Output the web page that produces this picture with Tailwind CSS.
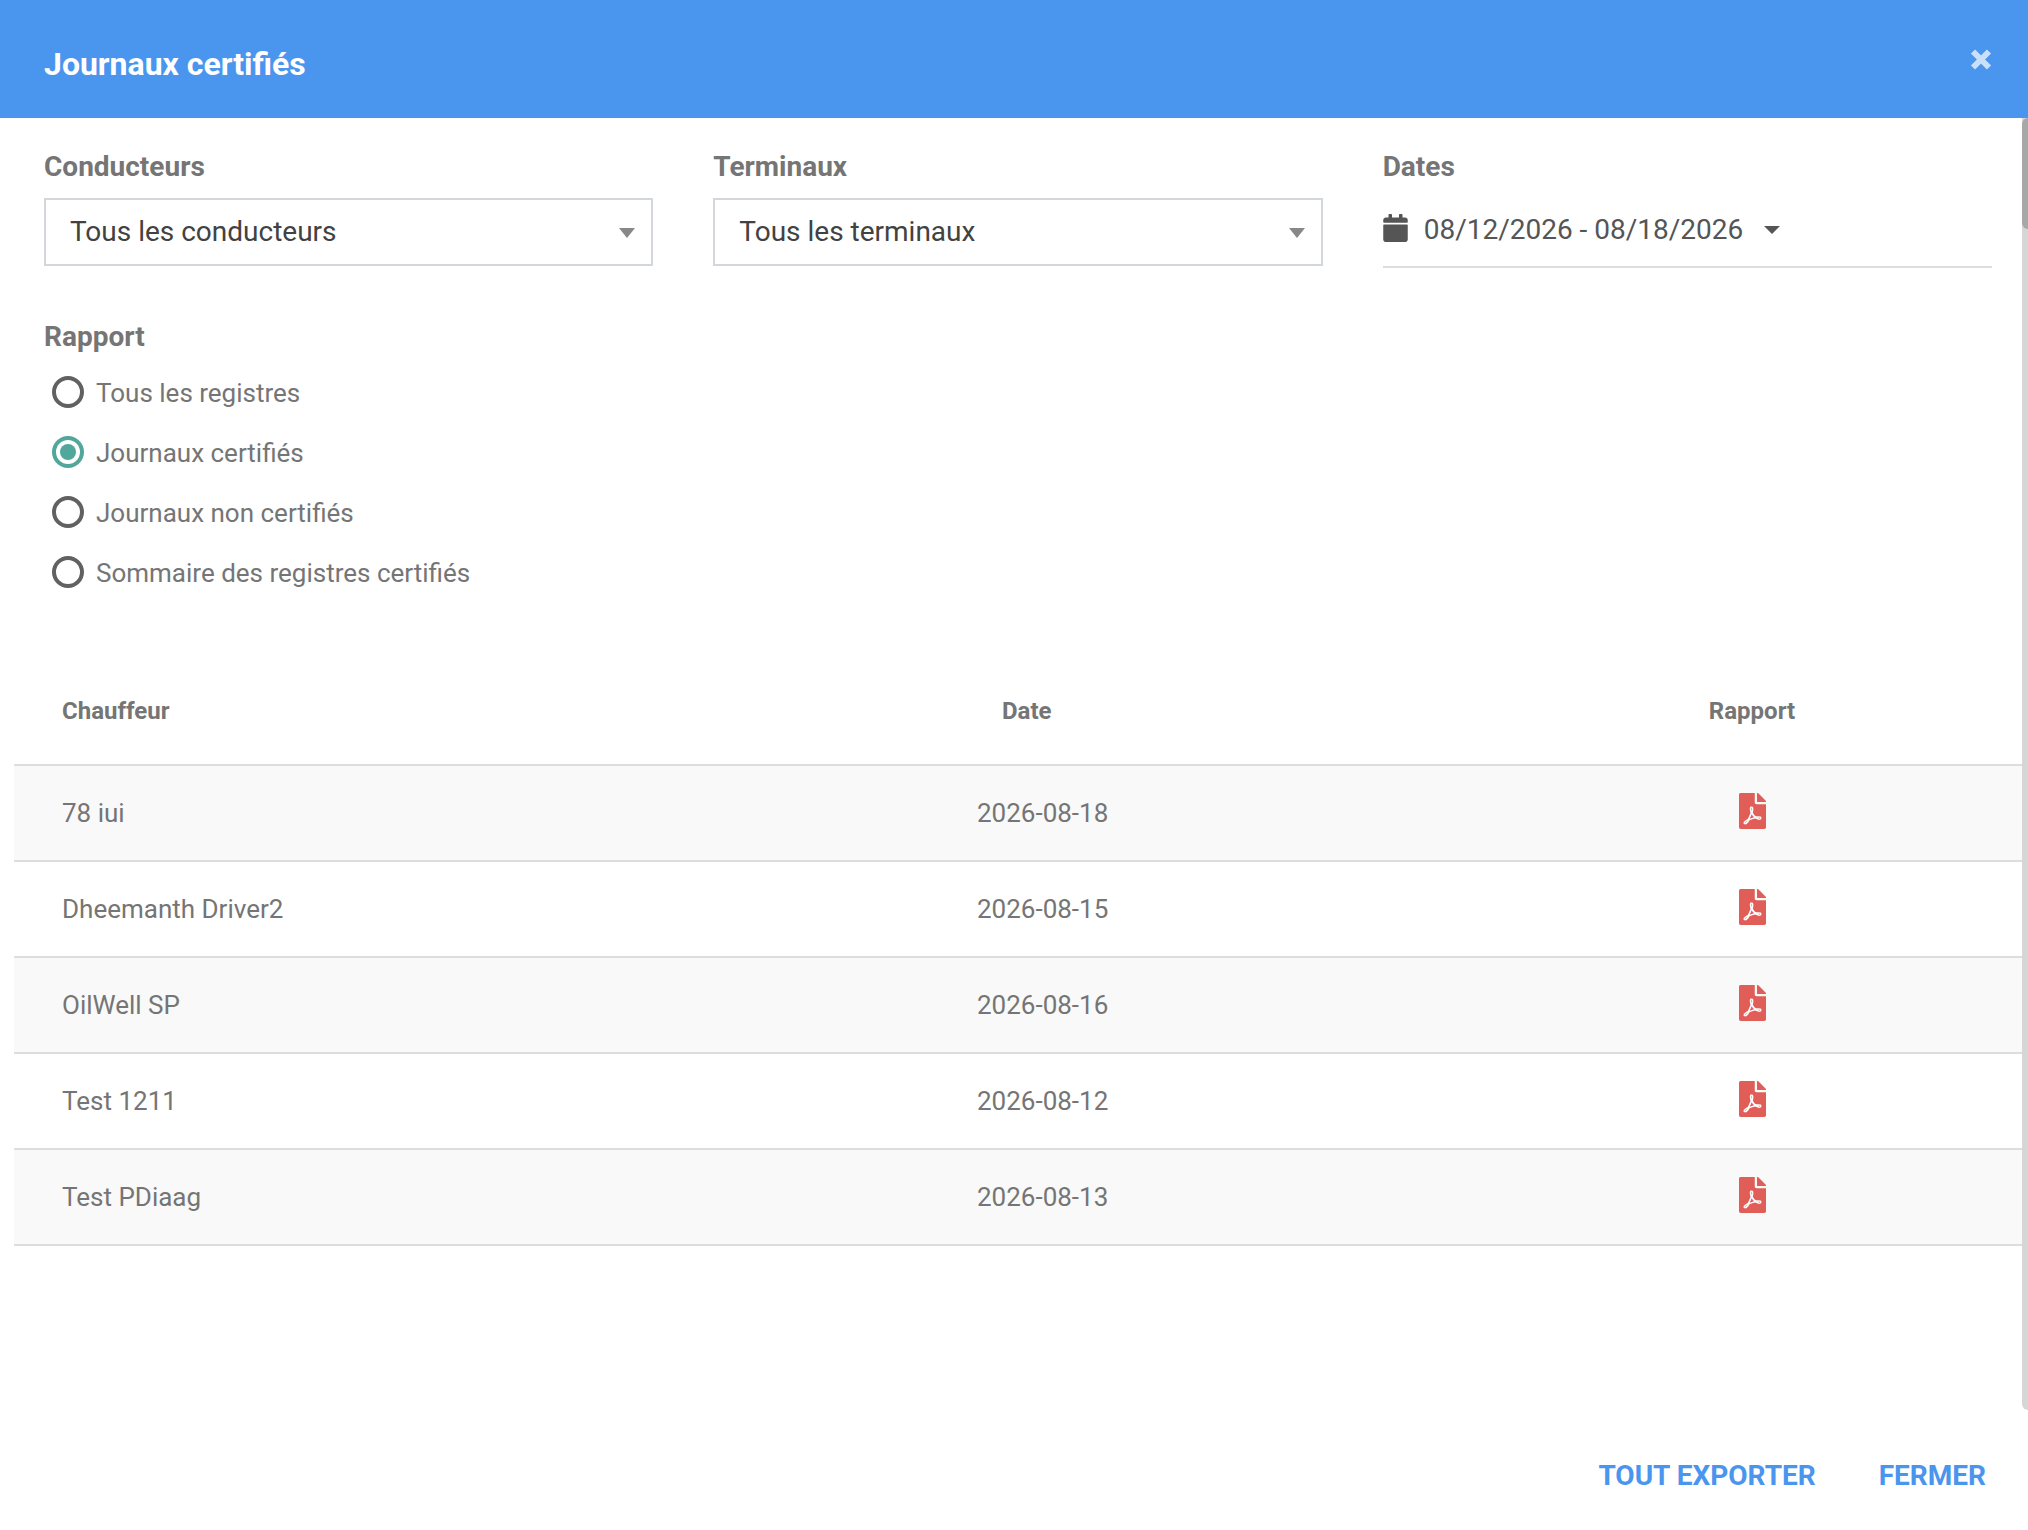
<!DOCTYPE html>
<html lang="fr">
  <head>
    <meta charset="UTF-8" />
    <title>Journaux certifiés</title>
    <script src="https://cdn.jsdelivr.net/npm/@tailwindcss/browser@4"></script>
  </head>
  <body class="bg-white font-['Roboto',sans-serif]">
    <div class="relative w-[2028px] h-[1530px] overflow-hidden flex flex-col">
      <!-- header -->
      <div class="h-[118px] shrink-0 bg-[#4a95ee] flex justify-between pl-[44px] pr-[36px]">
        <h1 class="mt-[45px] text-[32px] leading-[38px] font-bold text-white">Journaux certifiés</h1>
        <svg class="mt-[49px] w-[22px] h-[21px] text-white/70" viewBox="0 0 22 21" fill="none" stroke="currentColor" stroke-width="6">
          <path d="M3 2.5 19 18.5M19 2.5 3 18.5" />
        </svg>
      </div>

      <!-- filters -->
      <div class="grid grid-cols-3 gap-x-[60px] pl-[44px] pr-[36px] pt-[33px]">
        <div>
          <div class="text-[28px] leading-[32px] font-bold text-[#757575]">Conducteurs</div>
          <div class="mt-[15px] h-[68px] border-2 border-[#d3d7db] flex items-center justify-between pl-[24px] pr-[16px]">
            <span class="text-[28px] text-[#424242]">Tous les conducteurs</span>
            <span class="mt-[2px] w-0 h-0 border-x-[8px] border-x-transparent border-t-[10px] border-t-[#888888]"></span>
          </div>
        </div>
        <div>
          <div class="text-[28px] leading-[32px] font-bold text-[#757575]">Terminaux</div>
          <div class="mt-[15px] h-[68px] border-2 border-[#d3d7db] flex items-center justify-between pl-[24px] pr-[16px]">
            <span class="text-[28px] text-[#424242]">Tous les terminaux</span>
            <span class="mt-[2px] w-0 h-0 border-x-[8px] border-x-transparent border-t-[10px] border-t-[#888888]"></span>
          </div>
        </div>
        <div>
          <div class="text-[28px] leading-[32px] font-bold text-[#757575]">Dates</div>
          <div class="mt-[15px] h-[70px] border-b-2 border-[#dddddd] flex items-center pb-[4px] text-[#555555]">
            <svg class="mb-[4px] w-[25px] h-[28px] fill-current" viewBox="0 0 448 512">
              <path d="M12 192h424c6.6 0 12 5.4 12 12v260c0 26.5-21.5 48-48 48H48c-26.5 0-48-21.5-48-48V204c0-6.6 5.4-12 12-12zm436-44v-36c0-26.5-21.5-48-48-48h-48V12c0-6.6-5.4-12-12-12h-40c-6.6 0-12 5.4-12 12v52H160V12c0-6.6-5.4-12-12-12h-40c-6.6 0-12 5.4-12 12v52H48C21.5 64 0 85.5 0 112v36c0 6.6 5.4 12 12 12h424c6.6 0 12-5.4 12-12z" />
            </svg>
            <span class="ml-[16px] text-[28px]">08/12/2026 - 08/18/2026</span>
            <span class="ml-[21px] w-0 h-0 border-x-[8px] border-x-transparent border-t-[8px] border-t-[#555555]"></span>
          </div>
        </div>
      </div>

      <!-- report type -->
      <div class="pl-[44px] mt-[53px]">
        <div class="text-[28px] leading-[32px] font-bold text-[#757575]">Rapport</div>
        <div class="mt-[9px] pl-[8px] text-[26px] text-[#757575]">
          <div class="h-[60px] flex items-center gap-[12px]">
            <span class="w-[32px] h-[32px] rounded-full border-[4px] border-[#616161]"></span>
            <span class="mt-[2px]">Tous les registres</span>
          </div>
          <div class="h-[60px] flex items-center gap-[12px]">
            <span class="w-[32px] h-[32px] rounded-full border-[4px] border-[#52a79b] flex items-center justify-center">
              <span class="w-[16px] h-[16px] rounded-full bg-[#52a79b]"></span>
            </span>
            <span class="mt-[2px]">Journaux certifiés</span>
          </div>
          <div class="h-[60px] flex items-center gap-[12px]">
            <span class="w-[32px] h-[32px] rounded-full border-[4px] border-[#616161]"></span>
            <span class="mt-[2px]">Journaux non certifiés</span>
          </div>
          <div class="h-[60px] flex items-center gap-[12px]">
            <span class="w-[32px] h-[32px] rounded-full border-[4px] border-[#616161]"></span>
            <span class="mt-[2px]">Sommaire des registres certifiés</span>
          </div>
        </div>
      </div>

      <!-- table -->
      <div class="ml-[14px] mr-[6px] mt-[53px] text-[26px] text-[#757575]">
        <div class="h-[109px] pt-[3px] grid grid-cols-[963px_505px_1fr] items-center text-[24px] font-bold">
          <div class="pl-[48px]">Chauffeur</div>
          <div class="pl-[25px]">Date</div>
          <div class="text-center">Rapport</div>
        </div>
        <div class="h-[96px] grid grid-cols-[963px_505px_1fr] items-center border-t-2 border-[#dddddd] bg-[#f9f9f9]">
          <div class="pl-[48px]">78 iui</div>
          <div>2026-08-18</div>
          <svg class="justify-self-center mb-[4px] w-[27px] h-[36px] fill-[#e05d58]" viewBox="0 0 384 512"><path d="M181.9 256.1c-5-16-4.9-46.9-2-46.9 8.4 0 7.6 36.9 2 46.9zm-1.7 47.2c-7.7 20.2-17.3 43.3-28.4 62.7 18.3-7 39-17.2 62.9-21.9-12.7-9.6-24.9-23.4-34.5-40.8zM86.1 428.1c0 .8 13.2-5.4 34.9-40.2-6.7 6.3-29.1 24.5-34.9 40.2zM248 160h136v328c0 13.3-10.7 24-24 24H24c-13.3 0-24-10.7-24-24V24C0 10.7 10.7 0 24 0h200v136c0 13.2 10.8 24 24 24zm-8 171.8c-20-12.2-33.3-29-42.7-53.8 4.5-18.5 11.6-46.6 6.2-64.2-4.7-29.4-42.4-26.5-47.8-6.8-5 18.3-.4 44.1 8.1 77-11.6 27.6-28.7 64.6-40.8 85.8-.1 0-.1.1-.2.1-27.1 13.9-73.6 44.5-54.5 68 5.6 6.9 16 10 21.5 10 17.9 0 35.7-18 61.1-61.8 25.8-8.5 54.1-19.1 79-23.2 21.7 11.8 47.1 19.5 64 19.5 29.2 0 31.2-32 19.7-43.4-13.9-13.6-54.3-9.7-73.6-7.2zM377 105L279 7c-4.5-4.5-10.6-7-17-7h-6v128h128v-6.1c0-6.3-2.5-12.4-7-16.9zm-74.1 255.3c4.1-2.7-2.5-11.9-42.8-9 37.1 15.8 42.8 9 42.8 9z" /></svg>
        </div>
        <div class="h-[96px] grid grid-cols-[963px_505px_1fr] items-center border-t-2 border-[#dddddd]">
          <div class="pl-[48px]">Dheemanth Driver2</div>
          <div>2026-08-15</div>
          <svg class="justify-self-center mb-[4px] w-[27px] h-[36px] fill-[#e05d58]" viewBox="0 0 384 512"><path d="M181.9 256.1c-5-16-4.9-46.9-2-46.9 8.4 0 7.6 36.9 2 46.9zm-1.7 47.2c-7.7 20.2-17.3 43.3-28.4 62.7 18.3-7 39-17.2 62.9-21.9-12.7-9.6-24.9-23.4-34.5-40.8zM86.1 428.1c0 .8 13.2-5.4 34.9-40.2-6.7 6.3-29.1 24.5-34.9 40.2zM248 160h136v328c0 13.3-10.7 24-24 24H24c-13.3 0-24-10.7-24-24V24C0 10.7 10.7 0 24 0h200v136c0 13.2 10.8 24 24 24zm-8 171.8c-20-12.2-33.3-29-42.7-53.8 4.5-18.5 11.6-46.6 6.2-64.2-4.7-29.4-42.4-26.5-47.8-6.8-5 18.3-.4 44.1 8.1 77-11.6 27.6-28.7 64.6-40.8 85.8-.1 0-.1.1-.2.1-27.1 13.9-73.6 44.5-54.5 68 5.6 6.9 16 10 21.5 10 17.9 0 35.7-18 61.1-61.8 25.8-8.5 54.1-19.1 79-23.2 21.7 11.8 47.1 19.5 64 19.5 29.2 0 31.2-32 19.7-43.4-13.9-13.6-54.3-9.7-73.6-7.2zM377 105L279 7c-4.5-4.5-10.6-7-17-7h-6v128h128v-6.1c0-6.3-2.5-12.4-7-16.9zm-74.1 255.3c4.1-2.7-2.5-11.9-42.8-9 37.1 15.8 42.8 9 42.8 9z" /></svg>
        </div>
        <div class="h-[96px] grid grid-cols-[963px_505px_1fr] items-center border-t-2 border-[#dddddd] bg-[#f9f9f9]">
          <div class="pl-[48px]">OilWell SP</div>
          <div>2026-08-16</div>
          <svg class="justify-self-center mb-[4px] w-[27px] h-[36px] fill-[#e05d58]" viewBox="0 0 384 512"><path d="M181.9 256.1c-5-16-4.9-46.9-2-46.9 8.4 0 7.6 36.9 2 46.9zm-1.7 47.2c-7.7 20.2-17.3 43.3-28.4 62.7 18.3-7 39-17.2 62.9-21.9-12.7-9.6-24.9-23.4-34.5-40.8zM86.1 428.1c0 .8 13.2-5.4 34.9-40.2-6.7 6.3-29.1 24.5-34.9 40.2zM248 160h136v328c0 13.3-10.7 24-24 24H24c-13.3 0-24-10.7-24-24V24C0 10.7 10.7 0 24 0h200v136c0 13.2 10.8 24 24 24zm-8 171.8c-20-12.2-33.3-29-42.7-53.8 4.5-18.5 11.6-46.6 6.2-64.2-4.7-29.4-42.4-26.5-47.8-6.8-5 18.3-.4 44.1 8.1 77-11.6 27.6-28.7 64.6-40.8 85.8-.1 0-.1.1-.2.1-27.1 13.9-73.6 44.5-54.5 68 5.6 6.9 16 10 21.5 10 17.9 0 35.7-18 61.1-61.8 25.8-8.5 54.1-19.1 79-23.2 21.7 11.8 47.1 19.5 64 19.5 29.2 0 31.2-32 19.7-43.4-13.9-13.6-54.3-9.7-73.6-7.2zM377 105L279 7c-4.5-4.5-10.6-7-17-7h-6v128h128v-6.1c0-6.3-2.5-12.4-7-16.9zm-74.1 255.3c4.1-2.7-2.5-11.9-42.8-9 37.1 15.8 42.8 9 42.8 9z" /></svg>
        </div>
        <div class="h-[96px] grid grid-cols-[963px_505px_1fr] items-center border-t-2 border-[#dddddd]">
          <div class="pl-[48px]">Test 1211</div>
          <div>2026-08-12</div>
          <svg class="justify-self-center mb-[4px] w-[27px] h-[36px] fill-[#e05d58]" viewBox="0 0 384 512"><path d="M181.9 256.1c-5-16-4.9-46.9-2-46.9 8.4 0 7.6 36.9 2 46.9zm-1.7 47.2c-7.7 20.2-17.3 43.3-28.4 62.7 18.3-7 39-17.2 62.9-21.9-12.7-9.6-24.9-23.4-34.5-40.8zM86.1 428.1c0 .8 13.2-5.4 34.9-40.2-6.7 6.3-29.1 24.5-34.9 40.2zM248 160h136v328c0 13.3-10.7 24-24 24H24c-13.3 0-24-10.7-24-24V24C0 10.7 10.7 0 24 0h200v136c0 13.2 10.8 24 24 24zm-8 171.8c-20-12.2-33.3-29-42.7-53.8 4.5-18.5 11.6-46.6 6.2-64.2-4.7-29.4-42.4-26.5-47.8-6.8-5 18.3-.4 44.1 8.1 77-11.6 27.6-28.7 64.6-40.8 85.8-.1 0-.1.1-.2.1-27.1 13.9-73.6 44.5-54.5 68 5.6 6.9 16 10 21.5 10 17.9 0 35.7-18 61.1-61.8 25.8-8.5 54.1-19.1 79-23.2 21.7 11.8 47.1 19.5 64 19.5 29.2 0 31.2-32 19.7-43.4-13.9-13.6-54.3-9.7-73.6-7.2zM377 105L279 7c-4.5-4.5-10.6-7-17-7h-6v128h128v-6.1c0-6.3-2.5-12.4-7-16.9zm-74.1 255.3c4.1-2.7-2.5-11.9-42.8-9 37.1 15.8 42.8 9 42.8 9z" /></svg>
        </div>
        <div class="h-[98px] grid grid-cols-[963px_505px_1fr] items-center border-y-2 border-[#dddddd] bg-[#f9f9f9]">
          <div class="pl-[48px]">Test PDiaag</div>
          <div>2026-08-13</div>
          <svg class="justify-self-center mb-[4px] w-[27px] h-[36px] fill-[#e05d58]" viewBox="0 0 384 512"><path d="M181.9 256.1c-5-16-4.9-46.9-2-46.9 8.4 0 7.6 36.9 2 46.9zm-1.7 47.2c-7.7 20.2-17.3 43.3-28.4 62.7 18.3-7 39-17.2 62.9-21.9-12.7-9.6-24.9-23.4-34.5-40.8zM86.1 428.1c0 .8 13.2-5.4 34.9-40.2-6.7 6.3-29.1 24.5-34.9 40.2zM248 160h136v328c0 13.3-10.7 24-24 24H24c-13.3 0-24-10.7-24-24V24C0 10.7 10.7 0 24 0h200v136c0 13.2 10.8 24 24 24zm-8 171.8c-20-12.2-33.3-29-42.7-53.8 4.5-18.5 11.6-46.6 6.2-64.2-4.7-29.4-42.4-26.5-47.8-6.8-5 18.3-.4 44.1 8.1 77-11.6 27.6-28.7 64.6-40.8 85.8-.1 0-.1.1-.2.1-27.1 13.9-73.6 44.5-54.5 68 5.6 6.9 16 10 21.5 10 17.9 0 35.7-18 61.1-61.8 25.8-8.5 54.1-19.1 79-23.2 21.7 11.8 47.1 19.5 64 19.5 29.2 0 31.2-32 19.7-43.4-13.9-13.6-54.3-9.7-73.6-7.2zM377 105L279 7c-4.5-4.5-10.6-7-17-7h-6v128h128v-6.1c0-6.3-2.5-12.4-7-16.9zm-74.1 255.3c4.1-2.7-2.5-11.9-42.8-9 37.1 15.8 42.8 9 42.8 9z" /></svg>
        </div>
      </div>

      <!-- footer -->
      <div class="mt-auto flex justify-end gap-[63px] pr-[42px] pb-[36px] text-[28px] leading-[36px] font-bold text-[#4a95ee]">
        <button>TOUT EXPORTER</button>
        <button>FERMER</button>
      </div>

      <!-- scrollbar -->
      <div class="absolute right-0 top-[118px] w-[6px] h-[1292px] bg-[#d6d6d6] rounded-bl-[6px]">
        <div class="h-[111px] bg-[#a8a8a8] rounded-l-[6px]"></div>
      </div>
    </div>
  </body>
</html>
